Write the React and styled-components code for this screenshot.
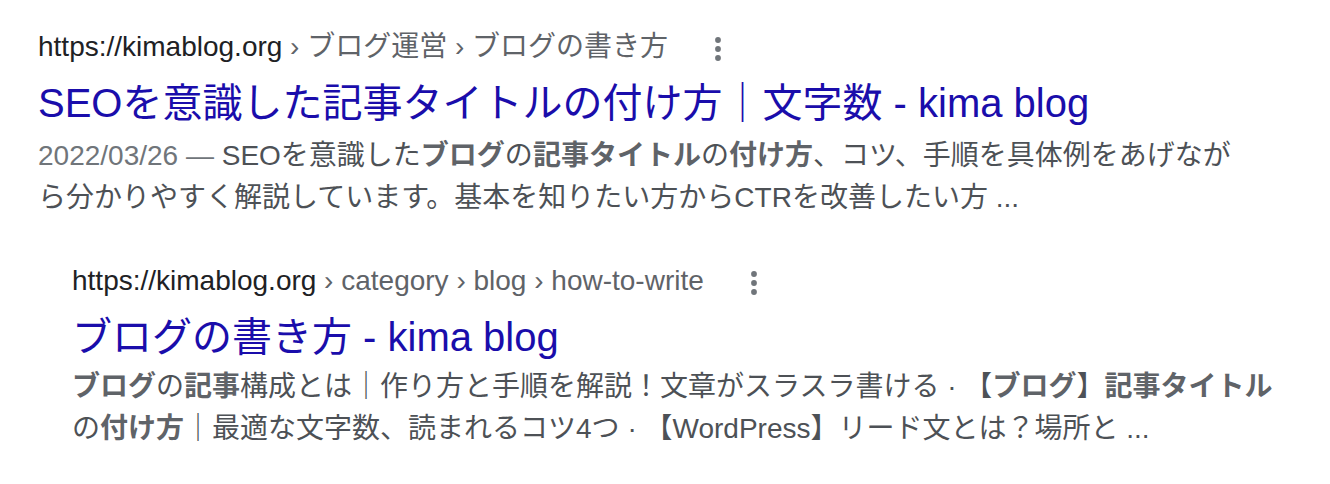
import React from "react";
import styled, { createGlobalStyle } from "styled-components";

const GlobalStyle = createGlobalStyle`
  html, body {
    margin: 0;
    padding: 0;
    background: #ffffff;
  }
  body {
    font-family: "Liberation Sans", Arial, "Noto Sans CJK JP", sans-serif;
    -webkit-font-smoothing: antialiased;
  }
`;

const Page = styled.div`
  padding: 25px 0 0 38px;
`;

const Result = styled.div`
  padding-left: ${(p) => (p.$nested ? "34px" : "0")};
  margin-top: ${(p) => (p.$nested ? "40px" : "0")};
`;

const CiteRow = styled.div`
  height: 44px;
  font-size: 28px;
  line-height: 44px;
  white-space: nowrap;
`;

const Domain = styled.span`
  color: #202124;
`;

const Crumbs = styled.span`
  color: #5f6368;
`;

const MoreButton = styled.span`
  display: inline-flex;
  align-items: center;
  justify-content: center;
  width: 36px;
  height: 36px;
  margin-left: 32px;
  vertical-align: -6px;
  color: #70757a;
`;

const Title = styled.h3`
  margin: 0 0 ${(p) => (p.$tight ? "3px" : "6px")};
  padding-top: 8px;
  font-size: 40px;
  line-height: 52px;
  font-weight: 400;
  color: #1a0dab;
  white-space: nowrap;
`;

const Snippet = styled.div`
  max-width: 1205px;
  font-size: 28px;
  line-height: 42px;
  color: #4d5156;
`;

const Date = styled.span`
  color: #70757a;
`;

const Em = styled.b`
  color: #5f6368;
  font-weight: 700;
`;

const DotsIcon = () => (
  <svg width="8" height="26" viewBox="0 0 8 26" fill="currentColor">
    <circle cx="4" cy="4" r="2.9" />
    <circle cx="4" cy="13" r="2.9" />
    <circle cx="4" cy="22" r="2.9" />
  </svg>
);

const Cite = ({ domain, path }) => (
  <CiteRow>
    <Domain>{domain}</Domain>
    <Crumbs>{path.map((p) => ` › ${p}`).join("")}</Crumbs>
    <MoreButton>
      <DotsIcon />
    </MoreButton>
  </CiteRow>
);

const App = () => {
  return (
    <>
      <GlobalStyle />
      <Page>
        <Result>
          <Cite domain="https://kimablog.org" path={["ブログ運営", "ブログの書き方"]} />
          <Title>SEOを意識した記事タイトルの付け方｜文字数 - kima blog</Title>
          <Snippet>
            <Date>2022/03/26 — </Date>
            SEOを意識した<Em>ブログ</Em>の<Em>記事タイトル</Em>の<Em>付け方</Em>
            、コツ、手順を具体例をあげながら分かりやすく解説しています。基本を知りたい方からCTRを改善したい方 ...
          </Snippet>
        </Result>
        <Result $nested>
          <Cite
            domain="https://kimablog.org"
            path={["category", "blog", "how-to-write"]}
          />
          <Title $tight>ブログの書き方 - kima blog</Title>
          <Snippet>
            <Em>ブログ</Em>の<Em>記事</Em>構成とは｜作り方と手順を解説！文章がスラスラ書ける · 【<Em>ブログ</Em>】<Em>記事タイトル</Em>の<Em>付け方</Em>｜最適な文字数、読まれるコツ4つ · 【WordPress】リード文とは？場所と ...
          </Snippet>
        </Result>
      </Page>
    </>
  );
};

export default App;
